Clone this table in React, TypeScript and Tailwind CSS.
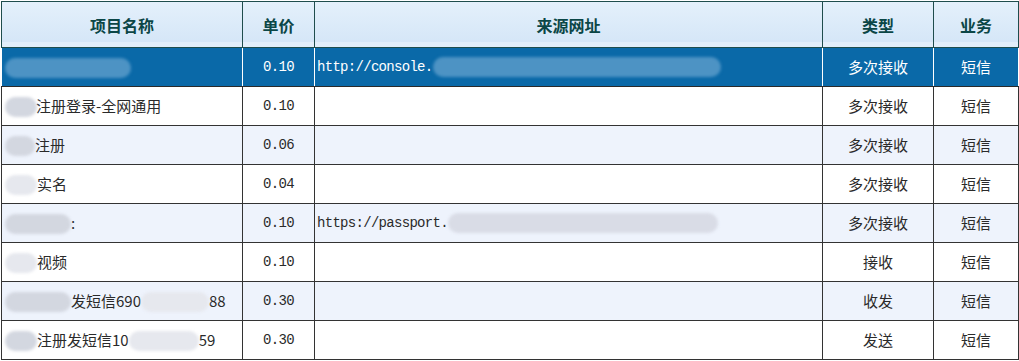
import React from "react";

type Row = {
  name: React.ReactNode;
  price: string;
  url?: React.ReactNode;
  type: string;
  biz: string;
};

const cjk = "font-['SimSun','Noto_Sans_CJK_SC',sans-serif]";
const mono = "font-['Liberation_Mono',monospace] text-[14px] tracking-[-0.7px]";

function Blob({ w, tone, className = "" }: { w: number; tone: "blue" | "gray" | "light"; className?: string }) {
  const color =
    tone === "blue" ? "bg-[#4d93c4]" : tone === "gray" ? "bg-[#d3d7e0]" : "bg-[#e6e8ee]";
  return (
    <span
      className={`inline-block h-[20px] rounded-full align-middle blur-[1.5px] ${color} ${className}`}
      style={{ width: w }}
    />
  );
}

const rows: Row[] = [
  {
    name: <Blob w={126} tone="blue" />,
    price: "0.10",
    url: (
      <>
        http://console.
        <Blob w={288} tone="blue" className="bg-[#3f8cc0]" />
      </>
    ),
    type: "多次接收",
    biz: "短信",
  },
  {
    name: (
      <>
        <Blob w={32} tone="gray" className="-mr-px" />
        注册登录-全网通用
      </>
    ),
    price: "0.10",
    type: "多次接收",
    biz: "短信",
  },
  {
    name: (
      <>
        <Blob w={30} tone="gray" />
        注册
      </>
    ),
    price: "0.06",
    type: "多次接收",
    biz: "短信",
  },
  {
    name: (
      <>
        <Blob w={32} tone="light" />
        实名
      </>
    ),
    price: "0.04",
    type: "多次接收",
    biz: "短信",
  },
  {
    name: (
      <>
        <Blob w={66} tone="gray" />:
      </>
    ),
    price: "0.10",
    url: (
      <>
        https://passport.
        <Blob w={270} tone="gray" className="bg-[#d9dce6]" />
      </>
    ),
    type: "多次接收",
    biz: "短信",
  },
  {
    name: (
      <>
        <Blob w={32} tone="light" />
        视频
      </>
    ),
    price: "0.10",
    type: "接收",
    biz: "短信",
  },
  {
    name: (
      <>
        <Blob w={66} tone="gray" />
        发短信690
        <Blob w={68} tone="light" />
        88
      </>
    ),
    price: "0.30",
    type: "收发",
    biz: "短信",
  },
  {
    name: (
      <>
        <Blob w={32} tone="gray" />
        注册发短信10
        <Blob w={70} tone="light" />
        59
      </>
    ),
    price: "0.30",
    type: "发送",
    biz: "短信",
  },
];

export default function App() {
  return (
    <div className="h-[361px] w-[1019px] overflow-hidden bg-white pl-px pt-px">
      <table className={`w-[1017px] table-fixed border-collapse text-[15px] ${cjk}`}>
        <colgroup>
          <col className="w-[241px]" />
          <col className="w-[72px]" />
          <col className="w-[508px]" />
          <col className="w-[111px]" />
          <col className="w-[85px]" />
        </colgroup>
        <thead>
          <tr className="h-[46px] bg-gradient-to-b from-[#e4f0fb] to-[#d3e5f7] text-[16px] font-bold text-[#0b4646] shadow-[inset_0_-6px_0_#e2eefa]">
            {["项目名称", "单价", "来源网址", "类型", "业务"].map((h) => (
              <th key={h} className="border border-[#1f4d4d] text-center">
                {h}
              </th>
            ))}
          </tr>
        </thead>
        <tbody>
          {rows.map((r, i) => {
            const sel = i === 0;
            const bg = sel ? "bg-[#0a69a8] text-white" : i % 2 === 0 ? "bg-[#eef3fc] text-[#2a2a2a]" : "bg-white text-[#2a2a2a]";
            const cell = sel ? "border-x border-x-white border-y border-y-[#2a2a2a]" : "border border-[#333]";
            return (
              <tr key={i} className={`h-[39px] ${bg}`}>
                <td className={`${cell} whitespace-nowrap pl-[3px]`}>{r.name}</td>
                <td className={`${cell} text-center ${mono}`}>{r.price}</td>
                <td className={`${cell} whitespace-nowrap pl-[2px] ${mono}`}>{r.url}</td>
                <td className={`${cell} text-center`}>{r.type}</td>
                <td className={`${cell} text-center`}>{r.biz}</td>
              </tr>
            );
          })}
        </tbody>
      </table>
    </div>
  );
}
